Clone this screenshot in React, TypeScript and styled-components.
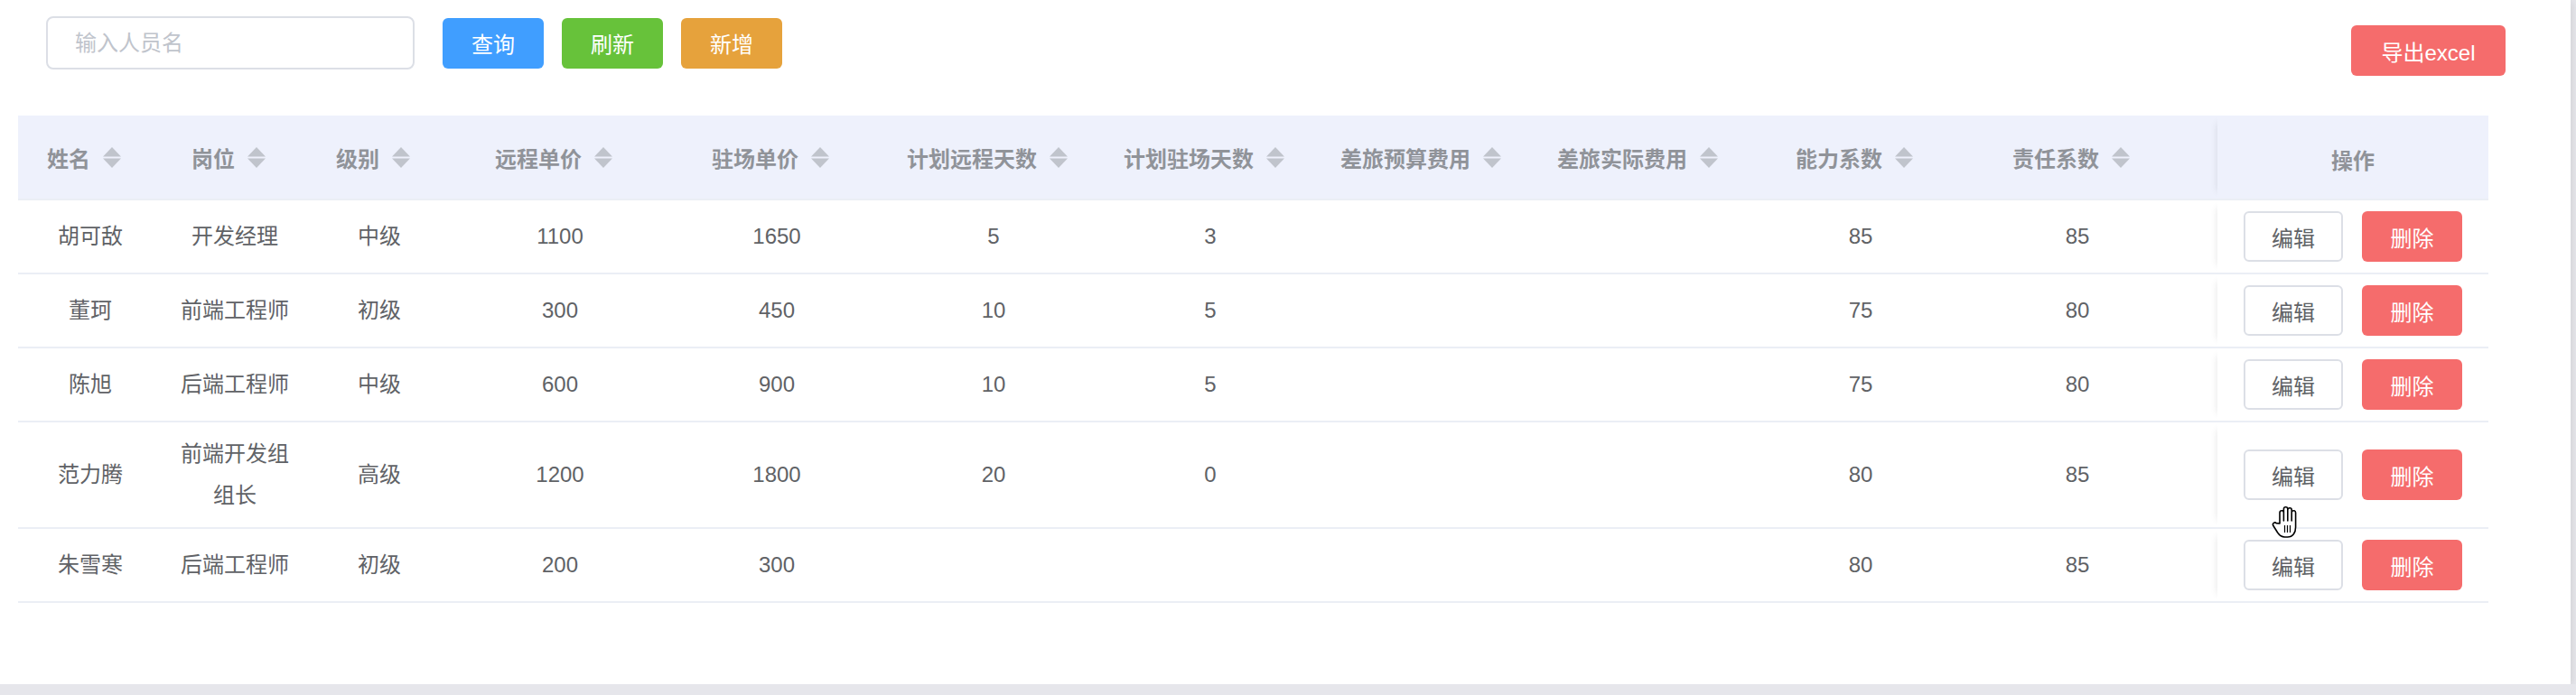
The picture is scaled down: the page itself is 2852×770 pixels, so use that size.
import React from 'react';
import styled, { createGlobalStyle } from 'styled-components';

const GlobalStyle = createGlobalStyle`
  html, body {
    margin: 0;
    padding: 0;
    background: #e6e6eb;
    overflow: hidden;
  }
  body {
    font-family: 'Liberation Sans', 'Noto Sans CJK SC', sans-serif;
  }
`;

interface IStaff {
  name: string;
  post: string;
  level: string;
  remotePrice: string;
  sitePrice: string;
  remoteDays: string;
  siteDays: string;
  budget: string;
  actual: string;
  ability: string;
  duty: string;
}

const staffList: IStaff[] = [
  { name: '胡可敌', post: '开发经理', level: '中级', remotePrice: '1100', sitePrice: '1650', remoteDays: '5', siteDays: '3', budget: '', actual: '', ability: '85', duty: '85' },
  { name: '董珂', post: '前端工程师', level: '初级', remotePrice: '300', sitePrice: '450', remoteDays: '10', siteDays: '5', budget: '', actual: '', ability: '75', duty: '80' },
  { name: '陈旭', post: '后端工程师', level: '中级', remotePrice: '600', sitePrice: '900', remoteDays: '10', siteDays: '5', budget: '', actual: '', ability: '75', duty: '80' },
  { name: '范力腾', post: '前端开发组组长', level: '高级', remotePrice: '1200', sitePrice: '1800', remoteDays: '20', siteDays: '0', budget: '', actual: '', ability: '80', duty: '85' },
  { name: '朱雪寒', post: '后端工程师', level: '初级', remotePrice: '200', sitePrice: '300', remoteDays: '', siteDays: '', budget: '', actual: '', ability: '80', duty: '85' },
];

const columns: { key: keyof IStaff; title: string }[] = [
  { key: 'name', title: '姓名' },
  { key: 'post', title: '岗位' },
  { key: 'level', title: '级别' },
  { key: 'remotePrice', title: '远程单价' },
  { key: 'sitePrice', title: '驻场单价' },
  { key: 'remoteDays', title: '计划远程天数' },
  { key: 'siteDays', title: '计划驻场天数' },
  { key: 'budget', title: '差旅预算费用' },
  { key: 'actual', title: '差旅实际费用' },
  { key: 'ability', title: '能力系数' },
  { key: 'duty', title: '责任系数' },
];

const gridColumns = '160px 160px 160px repeat(8, 240px) 35px 300px';

const Card = styled.div`
  position: relative;
  box-sizing: border-box;
  width: 2846px;
  height: 758px;
  padding: 18px 72px 0 20px;
  background: #fff;
  box-shadow: 0 2px 10px rgba(0, 0, 0, 0.12);
`;

const Toolbar = styled.div`
  display: flex;
  justify-content: space-between;
  align-items: flex-start;
  padding-left: 31px;
  margin-bottom: 44px;
`;

const SearchGroup = styled.div`
  display: flex;
  align-items: center;
  gap: 20px;
`;

const SearchInput = styled.input`
  box-sizing: border-box;
  width: 408px;
  height: 59px;
  margin-right: 11px;
  padding: 0 30px;
  border: 2px solid #dcdfe6;
  border-radius: 8px;
  font-family: inherit;
  font-size: 24px;
  color: #606266;
  outline: none;
  &::placeholder {
    color: #c0c4cc;
  }
`;

const Button = styled.button<{ $bg: string; $width: number }>`
  box-sizing: border-box;
  width: ${(p) => p.$width}px;
  height: 56px;
  padding: 0;
  border: none;
  border-radius: 6px;
  background: ${(p) => p.$bg};
  color: #fff;
  font-family: inherit;
  font-size: 24px;
  cursor: pointer;
`;

const ExportButton = styled(Button)`
  margin-top: 10px;
`;

const Table = styled.div`
  width: 2735px;
`;

const HeaderRow = styled.div`
  display: grid;
  grid-template-columns: ${gridColumns};
  height: 92px;
  background: #eef1fc;
  border-bottom: 2px solid #ebeef5;
`;

const HeaderCell = styled.div<{ $fixed?: boolean }>`
  display: flex;
  align-items: center;
  justify-content: center;
  padding-top: ${(p) => (p.$fixed ? '5px' : '0')};
  font-size: 24px;
  font-weight: bold;
  color: #909399;
  white-space: nowrap;
  box-shadow: ${(p) => (p.$fixed ? '-8px 0 8px -8px rgba(0, 0, 0, 0.1)' : 'none')};
`;

const SortCaret = styled.svg`
  margin: 0 14px 0 14px;
  flex-shrink: 0;
`;

const BodyRow = styled.div`
  display: grid;
  grid-template-columns: ${gridColumns};
  border-bottom: 2px solid #ebeef5;
`;

const BodyCell = styled.div`
  display: flex;
  align-items: center;
  justify-content: center;
  box-sizing: border-box;
  padding: 12px 18px;
  font-size: 24px;
  line-height: 46px;
  color: #606266;
  text-align: center;
`;

const ActionCell = styled.div`
  display: flex;
  align-items: center;
  justify-content: center;
  gap: 21px;
  padding: 12px 0;
  box-shadow: -8px 0 8px -8px rgba(0, 0, 0, 0.1);
`;

const EditButton = styled.button`
  box-sizing: border-box;
  width: 110px;
  height: 56px;
  padding: 0;
  border: 2px solid #dcdfe6;
  border-radius: 6px;
  background: #fff;
  color: #606266;
  font-family: inherit;
  font-size: 24px;
`;

const DeleteButton = styled.button`
  box-sizing: border-box;
  width: 111px;
  height: 56px;
  padding: 0;
  border: none;
  border-radius: 6px;
  background: #f56c6c;
  color: #fff;
  font-family: inherit;
  font-size: 24px;
`;

const Pointer = styled.svg`
  position: absolute;
  left: 2515px;
  top: 560px;
`;

const Caret: React.FC = () => (
  <SortCaret width="20" height="23" viewBox="0 0 20 23">
    <path d="M10 0 L20 10.5 L0 10.5 Z" fill="#c0c4cc" />
    <path d="M0 12.5 L20 12.5 L10 23 Z" fill="#c0c4cc" />
  </SortCaret>
);

const HandCursor: React.FC = () => (
  <Pointer width="36" height="38" viewBox="0 0 36 38">
    <path
      d="M9 20 V8 a2.2 2.2 0 0 1 4.4 0 V17 V4 a2.2 2.2 0 0 1 4.4 0 V17 V5 a2.2 2.2 0 0 1 4.4 0 V17 V8 a2.2 2.2 0 0 1 4.4 0 V24 c0 6 -3 11 -9 11 h-3 c-4 0 -6 -2 -8 -5 l-5 -8 a2.2 2.2 0 0 1 3.6 -2.4 Z"
      fill="#fff"
      stroke="#000"
      strokeWidth="1.6"
      strokeLinejoin="round"
    />
    <path d="M14.5 22 V30 M17.5 22 V30 M20.5 22 V30" stroke="#000" strokeWidth="1.2" />
  </Pointer>
);

const App: React.FC = () => {
  return (
    <>
      <GlobalStyle />
      <Card>
        <Toolbar>
          <SearchGroup>
            <SearchInput placeholder="输入人员名" />
            <Button $bg="#409eff" $width={112}>查询</Button>
            <Button $bg="#67c23a" $width={112}>刷新</Button>
            <Button $bg="#e6a23c" $width={112}>新增</Button>
          </SearchGroup>
          <ExportButton $bg="#f56c6c" $width={171}>导出excel</ExportButton>
        </Toolbar>
        <Table>
          <HeaderRow>
            {columns.map((col) => (
              <HeaderCell key={col.key}>
                <span>{col.title}</span>
                <Caret />
              </HeaderCell>
            ))}
            <HeaderCell />
            <HeaderCell $fixed>操作</HeaderCell>
          </HeaderRow>
          {staffList.map((row) => (
            <BodyRow key={row.name}>
              {columns.map((col) => (
                <BodyCell key={col.key}>{row[col.key]}</BodyCell>
              ))}
              <BodyCell />
              <ActionCell>
                <EditButton>编辑</EditButton>
                <DeleteButton>删除</DeleteButton>
              </ActionCell>
            </BodyRow>
          ))}
        </Table>
        <HandCursor />
      </Card>
    </>
  );
};

export default App;
